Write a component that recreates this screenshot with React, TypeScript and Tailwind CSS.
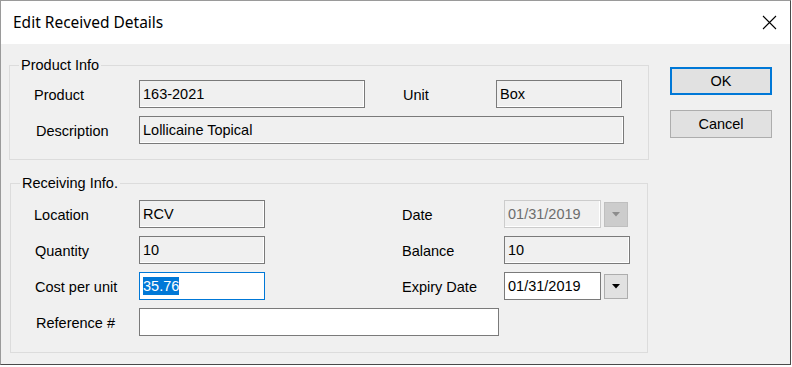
import React from "react";

const sans = { fontFamily: '"Liberation Sans", Arial, sans-serif' };

function Field({
  value,
  width,
  tone = "readonly",
  selected = false,
}: {
  value?: string;
  width: string;
  tone?: "readonly" | "edit" | "focus" | "disabled";
  selected?: boolean;
}) {
  const tones = {
    readonly: "bg-[#f0f0f0] border-[#7a7a7a] text-black shadow-[inset_-1px_-1px_0_#ffffff]",
    edit: "bg-white border-[#7a7a7a] text-black",
    focus: "bg-white border-[#0078d7] text-black",
    disabled: "bg-[#f0f0f0] border-[#cccccc] text-[#6d6d6d] shadow-[inset_-1px_-1px_0_#ffffff]",
  };
  return (
    <div className={`${width} h-[28px] shrink-0 border flex items-center pl-[3px] text-[14.5px] ${tones[tone]}`}>
      {selected ? (
        <span className="bg-[#0078d7] text-white leading-[18px]">{value}</span>
      ) : (
        <span className="leading-[18px]">{value}</span>
      )}
    </div>
  );
}

function DropButton({ disabled = false }: { disabled?: boolean }) {
  return (
    <div
      className={`w-[24px] h-[25px] ml-[3px] border flex items-center justify-center ${
        disabled ? "bg-[#cccccc] border-[#bfbfbf]" : "bg-[#e1e1e1] border-[#adadad]"
      }`}
    >
      <svg width="8" height="5" viewBox="0 0 8 5">
        <polygon points="0,0 8,0 4,4.5" fill={disabled ? "#8c8c8c" : "#000000"} />
      </svg>
    </div>
  );
}

function Label({ text, className }: { text: string; className: string }) {
  return <span className={`shrink-0 leading-[18px] mt-[2px] ${className}`}>{text}</span>;
}

function Group({
  title,
  className,
  children,
}: {
  title: string;
  className: string;
  children: React.ReactNode;
}) {
  return (
    <div className={`relative border border-[#dcdcdc] ${className}`}>
      <span className="absolute -top-[10px] left-[9px] bg-[#f0f0f0] px-[2px] text-[14.5px] leading-[18px] text-black">
        {title}
      </span>
      {children}
    </div>
  );
}

export default function App() {
  return (
    <div className="w-[792px] h-[367px] bg-white" style={sans}>
      <div className="w-[791px] h-[365px] border-l border-t border-[#9a9a9a] border-r border-b border-r-[#4a4a4a] border-b-[#4a4a4a] flex flex-col">
        <div className="h-[43px] bg-white flex items-center justify-between pl-[12px] pr-[13px]">
          <span
            className="text-[15.5px] text-black"
            style={{ fontFamily: '"Noto Sans", "Open Sans", sans-serif' }}
          >
            Edit Received Details
          </span>
          <svg width="15" height="15" viewBox="0 0 15 15">
            <path d="M1 1 L14 14 M14 1 L1 14" stroke="#000" strokeWidth="1.1" />
          </svg>
        </div>

        <div className="flex-1 bg-[#f0f0f0] flex text-[14.5px] text-black">
          <div className="flex flex-col pl-[8px]">
            <Group title="Product Info" className="mt-[21px] w-[640px] h-[95px] pt-[14px]">
              <div className="flex items-center">
                <Label text="Product" className="w-[129px] pl-[24px]" />
                <Field value="163-2021" width="w-[226px]" />
                <Label text="Unit" className="ml-[38px] w-[93px]" />
                <Field value="Box" width="w-[126px]" />
              </div>
              <div className="flex items-center mt-[8px]">
                <Label text="Description" className="w-[129px] pl-[26px]" />
                <Field value="Lollicaine Topical" width="w-[485px]" />
              </div>
            </Group>

            <Group title="Receiving Info." className="mt-[23px] ml-[1px] w-[638px] h-[170px] pt-[16px]">
              <div className="flex items-center">
                <Label text="Location" className="w-[128px] pl-[23px]" />
                <Field value="RCV" width="w-[126px]" />
                <Label text="Date" className="ml-[137px] w-[102px]" />
                <Field value="01/31/2019" width="w-[97px]" tone="disabled" />
                <DropButton disabled />
              </div>
              <div className="flex items-center mt-[8px]">
                <Label text="Quantity" className="w-[128px] pl-[24px]" />
                <Field value="10" width="w-[126px]" />
                <Label text="Balance" className="ml-[137px] w-[102px]" />
                <Field value="10" width="w-[126px]" />
              </div>
              <div className="flex items-center mt-[8px]">
                <Label text="Cost per unit" className="w-[128px] pl-[24px]" />
                <Field value="35.76" width="w-[126px]" tone="focus" selected />
                <Label text="Expiry Date" className="ml-[137px] w-[102px]" />
                <Field value="01/31/2019" width="w-[97px]" tone="edit" />
                <DropButton />
              </div>
              <div className="flex items-center mt-[8px]">
                <Label text="Reference #" className="w-[128px] pl-[25px]" />
                <Field width="w-[360px]" tone="edit" />
              </div>
            </Group>
          </div>

          <div className="flex flex-col ml-[21px] mt-[23px] gap-[15px]">
            <button className="w-[102px] h-[28px] bg-[#e1e1e1] border-2 border-[#0078d7] text-[14.5px] leading-none">
              OK
            </button>
            <button className="w-[102px] h-[28px] bg-[#e1e1e1] border border-[#adadad] text-[14.5px] leading-none">
              Cancel
            </button>
          </div>
        </div>
      </div>
    </div>
  );
}
